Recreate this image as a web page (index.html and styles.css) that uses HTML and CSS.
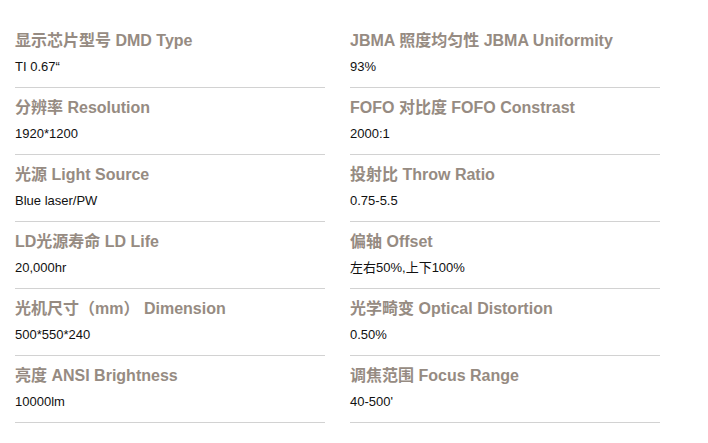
FILE: index.html
```html
<!DOCTYPE html>
<html lang="zh">
<head>
<meta charset="utf-8">
<link rel="stylesheet" href="styles.css">
</head>
<body>
<div class="specs">
  <div class="item"><div class="label">显示芯片型号 DMD Type</div><div class="value">TI 0.67“</div></div>
  <div class="item"><div class="label">JBMA 照度均匀性 JBMA Uniformity</div><div class="value">93%</div></div>
  <div class="item"><div class="label">分辨率 Resolution</div><div class="value">1920*1200</div></div>
  <div class="item"><div class="label">FOFO 对比度 FOFO Constrast</div><div class="value">2000:1</div></div>
  <div class="item"><div class="label">光源 Light Source</div><div class="value">Blue laser/PW</div></div>
  <div class="item"><div class="label">投射比 Throw Ratio</div><div class="value">0.75-5.5</div></div>
  <div class="item"><div class="label">LD光源寿命 LD Life</div><div class="value">20,000hr</div></div>
  <div class="item"><div class="label">偏轴 Offset</div><div class="value">左右50%,上下100%</div></div>
  <div class="item"><div class="label">光机尺寸（mm） Dimension</div><div class="value">500*550*240</div></div>
  <div class="item"><div class="label">光学畸变 Optical Distortion</div><div class="value">0.50%</div></div>
  <div class="item"><div class="label">亮度 ANSI Brightness</div><div class="value">10000lm</div></div>
  <div class="item"><div class="label">调焦范围 Focus Range</div><div class="value">40-500'</div></div>
</div>
</body>
</html>
```

FILE: styles.css
```css
html, body {
  margin: 0;
  padding: 0;
  background: #ffffff;
}
body {
  font-family: "Liberation Sans", Arial, "Noto Sans CJK SC", sans-serif;
}
.specs {
  display: grid;
  grid-template-columns: 310px 310px;
  column-gap: 25px;
  padding: 21px 0 0 15px;
}
.item {
  padding: 10px 0 10px 0;
  border-bottom: 1px solid #d2d2d2;
}
.label {
  font-size: 16px;
  line-height: 20px;
  font-weight: bold;
  color: #968b82;
  white-space: nowrap;
}
.value {
  margin-top: 6px;
  font-size: 13px;
  line-height: 20px;
  color: #111111;
  white-space: nowrap;
}
```
